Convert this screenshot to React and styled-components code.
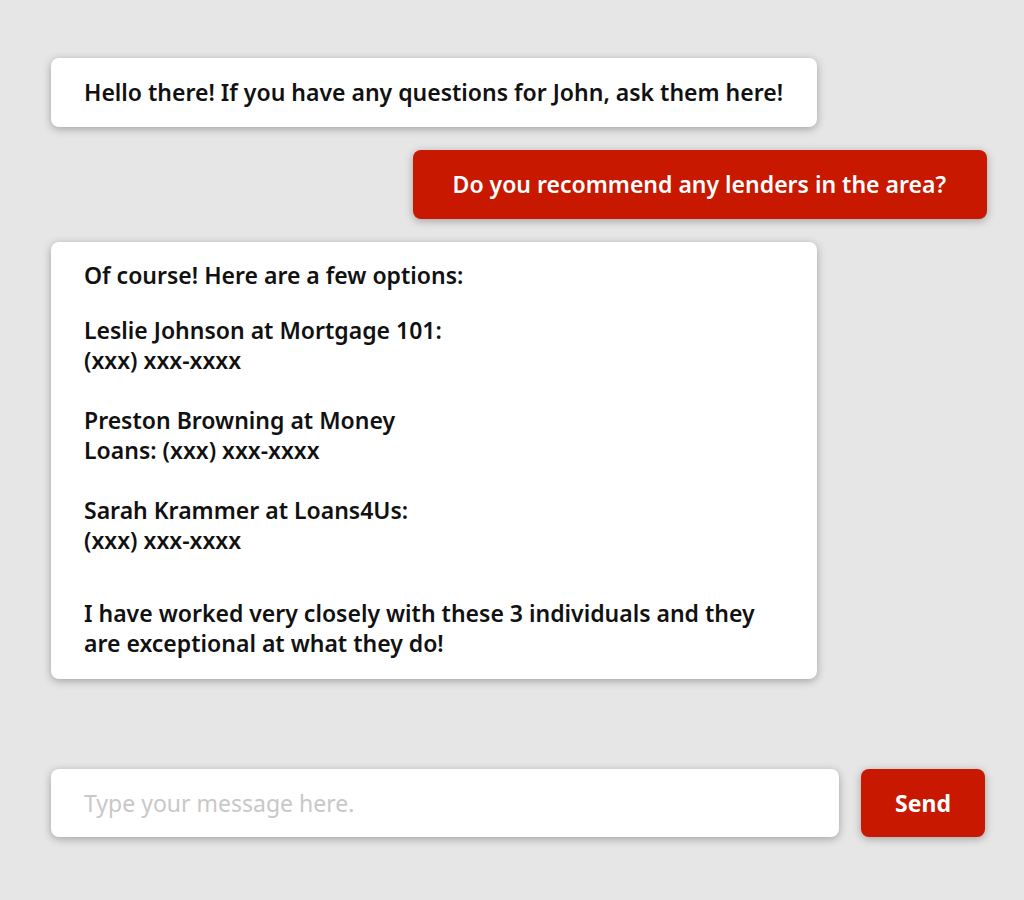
import styled, { createGlobalStyle } from 'styled-components';

const GlobalStyle = createGlobalStyle`
  html, body {
    margin: 0;
    padding: 0;
    background: #e6e6e6;
  }
  body {
    font-family: 'Noto Sans', 'Open Sans', sans-serif;
  }
`;

const Page = styled.div`
  min-height: 900px;
  box-sizing: border-box;
  padding: 58px 39px 0 51px;
  display: flex;
  flex-direction: column;
`;

const Thread = styled.div`
  display: flex;
  flex-direction: column;
  gap: 23px;
`;

const Bubble = styled.div`
  box-sizing: border-box;
  border-radius: 8px;
  font-size: 23px;
  font-weight: 600;
  line-height: 30px;
  box-shadow: 0 2px 9px rgba(0, 0, 0, 0.3);
  background: ${({ $mine }) => ($mine ? '#c81800' : '#ffffff')};
  color: ${({ $mine }) => ($mine ? '#ffffff' : '#111111')};
  align-self: ${({ $mine }) => ($mine ? 'flex-end' : 'flex-start')};
  width: ${({ $mine }) => ($mine ? 'auto' : '766px')};
  padding: ${({ $mine }) => ($mine ? '19px 41px 20px 40px' : '19px 33px 20px')};
  margin-right: ${({ $mine }) => ($mine ? '-2px' : '0')};
`;

const LongBubble = styled(Bubble)`
  padding: 18px 33px 21px;
`;

const Paragraph = styled.p`
  margin: 0;
  margin-top: ${({ $gap }) => $gap || 0}px;
`;

const Composer = styled.form`
  margin-top: 90px;
  display: flex;
  gap: 22px;
  align-items: stretch;
`;

const Input = styled.input`
  flex: 1;
  height: 68px;
  box-sizing: border-box;
  border: none;
  border-radius: 8px;
  background: #ffffff;
  padding: 0 33px;
  font-family: 'Noto Sans', 'Open Sans', sans-serif;
  font-size: 23px;
  color: #111;
  box-shadow: 0 2px 9px rgba(0, 0, 0, 0.3);
  outline: none;

  &::placeholder {
    color: #c8c8c8;
  }
`;

const SendButton = styled.button`
  width: 124px;
  height: 68px;
  border: none;
  border-radius: 8px;
  background: #c81800;
  color: #ffffff;
  font-family: 'Noto Sans', 'Open Sans', sans-serif;
  font-size: 23px;
  font-weight: 700;
  box-shadow: 0 2px 9px rgba(0, 0, 0, 0.3);
  cursor: pointer;
`;

function App() {
  return (
    <>
      <GlobalStyle />
      <Page>
        <Thread>
          <Bubble>Hello there! If you have any questions for John, ask them here!</Bubble>
          <Bubble $mine>Do you recommend any lenders in the area?</Bubble>
          <LongBubble>
            <Paragraph>Of course! Here are a few options:</Paragraph>
            <Paragraph $gap={25}>
              Leslie Johnson at Mortgage 101:
              <br />
              (xxx) xxx-xxxx
            </Paragraph>
            <Paragraph $gap={30}>
              Preston Browning at Money
              <br />
              Loans: (xxx) xxx-xxxx
            </Paragraph>
            <Paragraph $gap={30}>
              Sarah Krammer at Loans4Us:
              <br />
              (xxx) xxx-xxxx
            </Paragraph>
            <Paragraph $gap={43}>
              I have worked very closely with these 3 individuals and they
              are exceptional at what they do!
            </Paragraph>
          </LongBubble>
        </Thread>
        <Composer onSubmit={(e) => e.preventDefault()}>
          <Input placeholder="Type your message here." />
          <SendButton type="submit">Send</SendButton>
        </Composer>
      </Page>
    </>
  );
}

export default App;
